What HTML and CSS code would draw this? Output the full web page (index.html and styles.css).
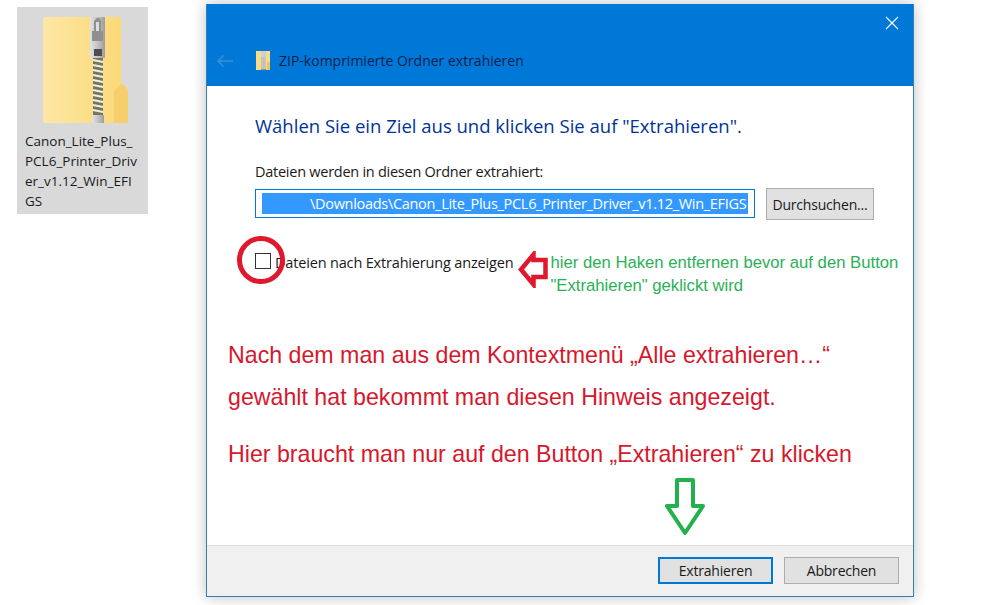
FILE: index.html
```html
<!DOCTYPE HTML>
<html>
<head>
<meta charset="utf-8">
<title>ZIP-komprimierte Ordner extrahieren</title>
<link rel="stylesheet" href="styles.css">
</head>
<body>
<div class="desk_icon">
	<svg class="zip_big" viewBox="0 0 85 106">
		<defs>
			<linearGradient id="fold" x1="0" y1="0" x2="1" y2="0">
				<stop offset="0" stop-color="#fde7a4"/>
				<stop offset="1" stop-color="#fbd977"/>
			</linearGradient>
			<linearGradient id="metal" x1="0" y1="0" x2="1" y2="0">
				<stop offset="0" stop-color="#e2e2e2"/>
				<stop offset=".5" stop-color="#c4c4c4"/>
				<stop offset="1" stop-color="#9c9c9c"/>
			</linearGradient>
		</defs>
		<path d="M2 0H76Q78 0 78 2V106H2Q0 106 0 104V2Q0 0 2 0Z" fill="url(#fold)"/>
		<path d="M71 74L79 66L85 73V104Q85 106 83 106H71Z" fill="#f6cf6c"/>
		<rect x="47" y="0" width="15" height="41" rx="1" fill="url(#metal)"/>
		<path d="M51 14V4L54 1H56L58 4V14H60V24H49V14Z" fill="#8f8f8f"/>
		<path d="M53 14V5H56V14Z" fill="#dedede"/>
		<rect x="51" y="32" width="8" height="7" fill="#4d4d4d"/>
		<rect x="50" y="41" width="10" height="57" fill="#77765c"/>
		<path d="M50 43L60 45M50 48L60 50M50 53L60 55M50 58L60 60M50 63L60 65M50 68L60 70M50 73L60 75M50 78L60 80M50 83L60 85M50 88L60 90M50 93L60 95" stroke="#f0f0e6" stroke-width="2.200"/>
		<rect x="49" y="98" width="12" height="8" fill="url(#metal)"/>
	</svg>
	<div class="desk_name">Canon_Lite_Plus_<br>PCL6_Printer_Driv<br>er_v1.12_Win_EFI<br>GS</div>
</div>

<div class="dlg">
	<div class="dlg_head">
		<div class="dlg_close">
			<svg width="14" height="14" viewBox="0 0 14 14"><path d="M1 1L13 13M13 1L1 13" stroke="#fff" stroke-width="1.2" fill="none"/></svg>
		</div>
		<div class="dlg_title">
			<svg class="back" width="16" height="12" viewBox="0 0 16 12"><path d="M16 6H1M6.500 .5L1 6L6.500 11.500" stroke="#3f8fd4" stroke-width="1.500" fill="none"/></svg>
			<svg class="zip_small" width="14" height="19" viewBox="0 0 14 19">
				<rect width="14" height="19" fill="#fbdc86"/>
				<rect x="5" width="5" height="19" fill="#9a9a88"/>
				<rect x="5" width="5" height="6" fill="#d0d0d0"/>
				<path d="M5 7H10M5 9H10M5 11H10M5 13H10M5 15H10M5 17H10" stroke="#eee" stroke-width="1"/>
				<rect x="11" y="11" width="3" height="8" fill="#f0c45a"/>
			</svg>
			<span>ZIP-komprimierte Ordner extrahieren</span>
		</div>
	</div>
	<div class="dlg_body">
		<h1 class="dlg_h">Wählen Sie ein Ziel aus und klicken Sie auf "Extrahieren".</h1>
		<p class="dlg_label">Dateien werden in diesen Ordner extrahiert:</p>
		<div class="path_row">
			<div class="path_input"><span class="path_sel">\Downloads\Canon_Lite_Plus_PCL6_Printer_Driver_v1.12_Win_EFIGS</span></div>
			<div class="btn btn_browse">Durchsuchen...</div>
		</div>
		<div class="check_row">
			<i class="check_box"></i>
			<span class="check_text">Dateien nach Extrahierung anzeigen</span>
			<svg class="arrow_red" width="30" height="37" viewBox="0 0 30 37"><path d="M27.500 9H15.500V3.500L3 18.500L15.500 33.500V26H27.500Z" fill="#fff" stroke="#e0182d" stroke-width="4.500"/></svg>
			<p class="note">hier den Haken entfernen bevor auf den Button<br>"Extrahieren" geklickt wird</p>
			<i class="ring"></i>
		</div>
		<div class="hints">
			<p>Nach dem man aus dem Kontextmenü „Alle extrahieren…“</p>
			<p>gewählt hat bekommt man diesen Hinweis angezeigt.</p>
			<p class="hint_last">Hier braucht man nur auf den Button „Extrahieren“ zu klicken</p>
		</div>
		<svg class="arrow_green" width="40" height="58" viewBox="0 0 40 58"><path d="M12 2H28V28H38L20 55L2 28H12Z" fill="#fff" stroke="#22b14c" stroke-width="4" stroke-linejoin="round"/></svg>
	</div>
	<div class="dlg_foot">
		<div class="btn btn_foot btn_default">Extrahieren</div>
		<div class="btn btn_foot">Abbrechen</div>
	</div>
</div>
</body>
</html>
```

FILE: styles.css
```css
html, body {
	margin:0;
	padding:0;
	height:100%;
	overflow:hidden;
	background:#ffffff;
	font-family:"Open Sans","Noto Sans","Liberation Sans",sans-serif;
}
p, h1 {
	margin:0;
	font-weight:normal;
}

/* desktop icon */
.desk_icon {
	position:absolute;
	left:17px;
	top:7px;
	width:131px;
	height:207px;
	box-sizing:border-box;
	padding:10px 0 0 8px;
	background:#d9d9d9;
}
.zip_big {
	display:block;
	width:85px;
	height:106px;
	margin-left:18px;
}
.desk_name {
	margin-top:8px;
	font-size:13.500px;
	line-height:20px;
	color:#1a1a1a;
	white-space:nowrap;
}

/* dialog window */
.dlg {
	position:absolute;
	left:206px;
	top:4px;
	width:708px;
	height:593px;
	box-sizing:border-box;
	display:flex;
	flex-direction:column;
	background:#ffffff;
	border:1px solid #2f7fbd;
	border-top:0;
	box-shadow:0 0 14px rgba(0,0,0,.25);
}
.dlg_head {
	height:82px;
	flex:none;
	box-sizing:border-box;
	padding:12px 14px 0 10px;
	background:#0078d7;
}
.dlg_close {
	display:flex;
	justify-content:flex-end;
	height:14px;
}
.dlg_title {
	display:flex;
	align-items:center;
	margin-top:21px;
	font-size:14px;
	color:#0c1f4d;
}
.zip_small {
	margin-left:23px;
	margin-right:9px;
}
.dlg_body {
	flex:1;
	position:relative;
	padding:27px 0 0 48px;
}
.dlg_h {
	font-size:18.500px;
	line-height:26px;
	color:#003399;
	white-space:nowrap;
}
.dlg_label {
	margin-top:24px;
	font-size:14.500px;
	letter-spacing:-.26px;
	line-height:18px;
	color:#1a1a1a;
}
.path_row {
	display:flex;
	align-items:center;
	margin-top:6px;
}
.path_input {
	width:500px;
	height:29px;
	box-sizing:border-box;
	display:flex;
	align-items:center;
	padding:0 6px;
	border:1px solid #0078d7;
	overflow:hidden;
}
.path_sel {
	display:block;
	flex:1;
	height:21px;
	box-sizing:border-box;
	padding-left:48px;
	background:#3399ff;
	color:#ffffff;
	font-size:14.500px;
	letter-spacing:-.3px;
	line-height:21px;
	white-space:nowrap;
	overflow:hidden;
}
.btn {
	box-sizing:border-box;
	display:flex;
	align-items:center;
	justify-content:center;
	background:#e1e1e1;
	border:1px solid #adadad;
	color:#1a1a1a;
	font-size:14px;
	letter-spacing:-.2px;
}
.btn_browse {
	width:108px;
	height:32px;
	margin-left:11px;
	position:relative;
	top:1px;
}
.check_row {
	position:relative;
	display:flex;
	align-items:flex-start;
	margin-top:32px;
}
.check_box {
	display:block;
	width:16px;
	height:16px;
	box-sizing:border-box;
	margin-top:2px;
	border:1px solid #333333;
}
.check_text {
	margin-left:4px;
	margin-top:2px;
	font-size:14.500px;
	letter-spacing:-.17px;
	line-height:20px;
	color:#1a1a1a;
}
.arrow_red {
	margin:0 0 0 5px;
}
.note {
	margin-left:2px;
	margin-top:0;
	font-family:"Liberation Sans",Arial,sans-serif;
	font-size:16.700px;
	line-height:23px;
	color:#2bb056;
	white-space:nowrap;
}
.ring {
	position:absolute;
	left:-18px;
	top:-15px;
	width:48px;
	height:48px;
	box-sizing:border-box;
	border:5px solid #e0182d;
	border-radius:50%;
}
.hints {
	margin:37px 0 0 -27px;
	font-family:"Liberation Sans",Arial,sans-serif;
	font-size:23.200px;
	line-height:42px;
	color:#d6182d;
	white-space:nowrap;
}
.hint_last {
	margin-top:15px;
}
.arrow_green {
	position:absolute;
	left:458px;
	top:392px;
}
.dlg_foot {
	flex:none;
	height:51px;
	box-sizing:border-box;
	display:flex;
	justify-content:flex-end;
	gap:11px;
	padding:11px 14px 0 0;
	background:#f0f0f0;
	border-top:1px solid #dfdfdf;
}
.btn_foot {
	width:115px;
	height:27px;
}
.btn_default {
	border:2px solid #0078d7;
}
```
